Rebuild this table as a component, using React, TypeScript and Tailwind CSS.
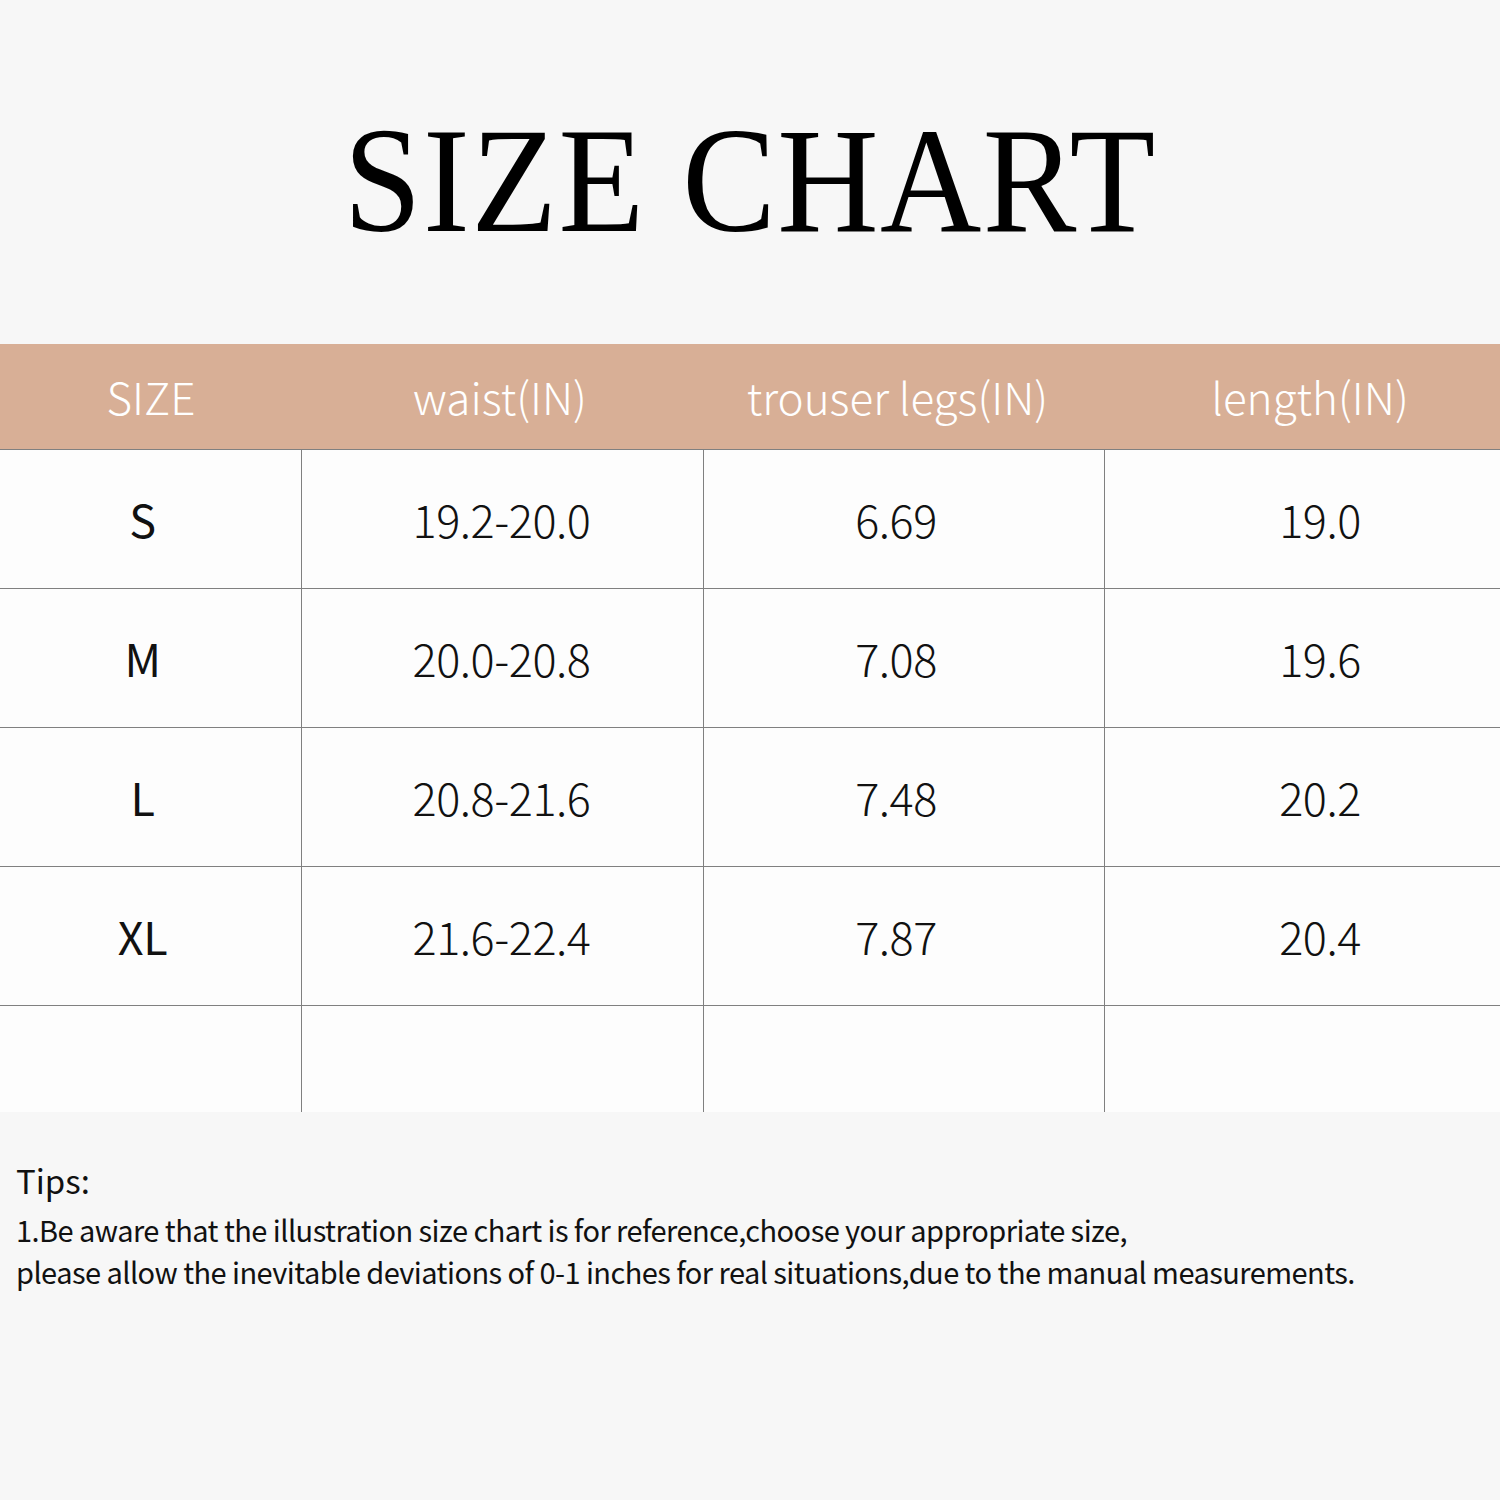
import React from "react";

const SANS = "font-['Noto_Sans_CJK_SC','Noto_Sans',sans-serif]";

const HEADERS = ["SIZE", "waist(IN)", "trouser legs(IN)", "length(IN)"];
const HEADER_PAD = ["", "pr-[6px]", "pr-[14px]", "pl-[15px]"];

const ROWS: string[][] = [
  ["S", "19.2-20.0", "6.69", "19.0"],
  ["M", "20.0-20.8", "7.08", "19.6"],
  ["L", "20.8-21.6", "7.48", "20.2"],
  ["XL", "21.6-22.4", "7.87", "20.4"],
];
const CELL_PAD = ["pr-[16px] font-normal", "pr-[2px]", "pr-[16px]", "pl-[35px]"];

const COLS = "grid grid-cols-[302px_402px_401px_395px]";

export default function App() {
  return (
    <div className={`flex h-[1500px] w-[1500px] flex-col bg-[#f7f7f7] ${SANS}`}>
      <div className="flex h-[344px] items-center justify-center pt-[16px]">
        <h1 className="scale-x-[0.93] font-['Liberation_Serif',serif] text-[151px] leading-none tracking-[0.01em] text-black">
          SIZE CHART
        </h1>
      </div>

      <div className={`${COLS} h-[105px] bg-[#d8af96] text-[44px] font-light text-white`}>
        {HEADERS.map((h, i) => (
          <div key={h} className={`flex items-center justify-center pb-[2px] ${HEADER_PAD[i]}`}>
            {h}
          </div>
        ))}
      </div>

      <div className="border-t border-[#808080] bg-[#fdfdfd]">
        {ROWS.map((row) => (
          <div key={row[0]} className={`${COLS} h-[139px] border-b border-[#808080]`}>
            {row.map((cell, i) => (
              <div
                key={i}
                className={`flex items-center justify-center text-[45px] font-light tracking-[-0.01em] text-[#111] ${i < 3 ? "border-r border-[#808080]" : ""} ${CELL_PAD[i]}`}
              >
                {cell}
              </div>
            ))}
          </div>
        ))}
        <div className={`${COLS} h-[106px]`}>
          <div className="border-r border-[#808080]" />
          <div className="border-r border-[#808080]" />
          <div className="border-r border-[#808080]" />
          <div />
        </div>
      </div>

      <div className="px-[16px] pt-[46px] text-[#111]">
        <div className="text-[33px] leading-[44px]">Tips:</div>
        <p className="mt-[6px] text-[29px] leading-[42px] tracking-[-0.019em]">
          1.Be aware that the illustration size chart is for reference,choose your appropriate size,
          <br />
          please allow the inevitable deviations of 0-1 inches for real situations,due to the manual measurements.
        </p>
      </div>
    </div>
  );
}
